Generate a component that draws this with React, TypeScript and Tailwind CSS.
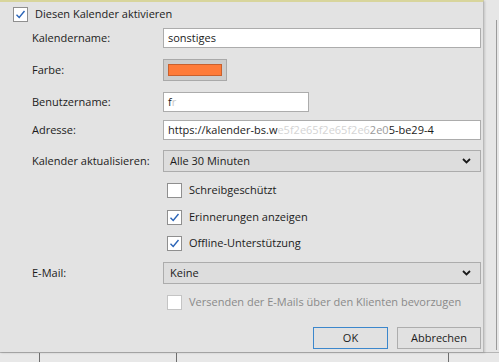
import React from 'react';

const font = { fontFamily: '"Open Sans", "Noto Sans", sans-serif' };

function Check({ checked, disabled }: { checked?: boolean; disabled?: boolean }) {
  return (
    <div
      className={`w-[15px] h-[15px] shrink-0 border bg-white flex items-center justify-center ${
        disabled ? 'border-[#c4c4c4]' : 'border-[#8f8f8f]'
      }`}
    >
      {checked && (
        <svg width="11" height="11" viewBox="0 0 11 11">
          <path d="M1.5 5.8 L4.2 8.5 L9.5 2" fill="none" stroke="#2a64b7" strokeWidth="1.4" />
        </svg>
      )}
    </div>
  );
}

function Chevron() {
  return (
    <svg width="9" height="6" viewBox="0 0 9 6" className="shrink-0">
      <path d="M1 1 L4.5 4.5 L8 1" fill="none" stroke="#1a1a1a" strokeWidth="1.8" />
    </svg>
  );
}

export default function App() {
  return (
    <div className="relative w-[499px] h-[362px] overflow-hidden bg-[#e6e6e6] text-[11px] text-[#1b1b1b]" style={font}>
      {/* right side background */}
      <div className="absolute left-[496px] top-[20px] w-px h-[330px] bg-[#9a9a9a]" />
      {/* bottom table strip */}
      <div className="absolute left-0 top-[352px] w-[499px] h-[10px] bg-[#e8e8e8] border-t border-[#b5b5b5] flex">
        <div className="w-[40px] border-r border-[#6e6e6e]" />
        <div className="w-[137px] border-r border-[#6e6e6e]" />
        <div className="w-[272px] border-r border-[#6e6e6e]" />
      </div>

      {/* dialog */}
      <div className="relative w-[484px] h-[352px] bg-[#e3e3e3] border-t-2 border-t-[#d8d59c] border-r border-r-[#b9b9b9] shadow-[1px_1px_2px_rgba(0,0,0,0.15)]">
        <div className="flex items-center gap-[7px] pl-[13px] pt-[5px] h-[20px]">
          <Check checked />
          <span>Diesen Kalender aktivieren</span>
        </div>

        <div className="flex flex-col pl-[32px] pr-[2px]">
          <div className="flex items-center h-[20px] mt-[6px]">
            <span className="w-[131px]">Kalendername:</span>
            <div className="flex-1 h-[20px] bg-white border border-[#acacac] px-[4px] flex items-center">sonstiges</div>
          </div>

          <div className="flex items-center h-[22px] mt-[11px]">
            <span className="w-[131px]">Farbe:</span>
            <div className="w-[64px] h-[22px] bg-[#cdcdcd] border border-[#a9a9a9] flex items-center justify-center">
              <div className="w-[54px] h-[12px] bg-[#ff7b39] border border-[#c9602e]" />
            </div>
          </div>

          <div className="flex items-center h-[20px] mt-[11px]">
            <span className="w-[131px]">Benutzername:</span>
            <div className="w-[146px] h-[20px] bg-white border border-[#acacac] px-[4px] flex items-center">
              <span>f</span>
              <span className="text-[#c9c9c9]">r</span>
            </div>
          </div>

          <div className="flex items-center h-[20px] mt-[8px]">
            <span className="w-[131px]">Adresse:</span>
            <div className="flex-1 h-[20px] bg-white border border-[#acacac] px-[4px] flex items-center overflow-hidden whitespace-nowrap">
              <span>https://kalender-bs.w</span>
              <span className="text-[#d4d4d4]">e5f2e65f2e65f2e6</span>
              <span className="text-[#9a9a9a]">2e0</span>
              <span>5-be29-4</span>
            </div>
          </div>

          <div className="flex items-center h-[22px] mt-[10px]">
            <span className="w-[131px]">Kalender aktualisieren:</span>
            <div className="flex-1 h-[22px] bg-[#dddddd] border border-[#acacac] pl-[6px] pr-[9px] flex items-center justify-between">
              <span>Alle 30 Minuten</span>
              <Chevron />
            </div>
          </div>

          <div className="flex flex-col pl-[135px]">
            <div className="flex items-center gap-[7px] h-[15px] mt-[11px]">
              <Check />
              <span>Schreibgeschützt</span>
            </div>
            <div className="flex items-center gap-[7px] h-[15px] mt-[12px]">
              <Check checked />
              <span>Erinnerungen anzeigen</span>
            </div>
            <div className="flex items-center gap-[7px] h-[15px] mt-[11px]">
              <Check checked />
              <span>Offline-Unterstützung</span>
            </div>
          </div>

          <div className="flex items-center h-[22px] mt-[11px]">
            <span className="w-[131px]">E-Mail:</span>
            <div className="flex-1 h-[22px] bg-[#dddddd] border border-[#acacac] pl-[6px] pr-[9px] flex items-center justify-between">
              <span>Keine</span>
              <Chevron />
            </div>
          </div>

          <div className="flex items-center gap-[7px] h-[15px] mt-[11px] pl-[135px] text-[#8a8a8a] whitespace-nowrap">
            <Check disabled />
            <span>Versenden der E-Mails über den Klienten bevorzugen</span>
          </div>

          <div className="flex justify-end gap-[9px] mt-[17px]">
            <button className="w-[75px] h-[22px] bg-[#e1e1e1] border border-[#3c87cc]">OK</button>
            <button className="w-[84px] h-[22px] bg-[#e1e1e1] border border-[#adadad]">Abbrechen</button>
          </div>
        </div>
      </div>
    </div>
  );
}
